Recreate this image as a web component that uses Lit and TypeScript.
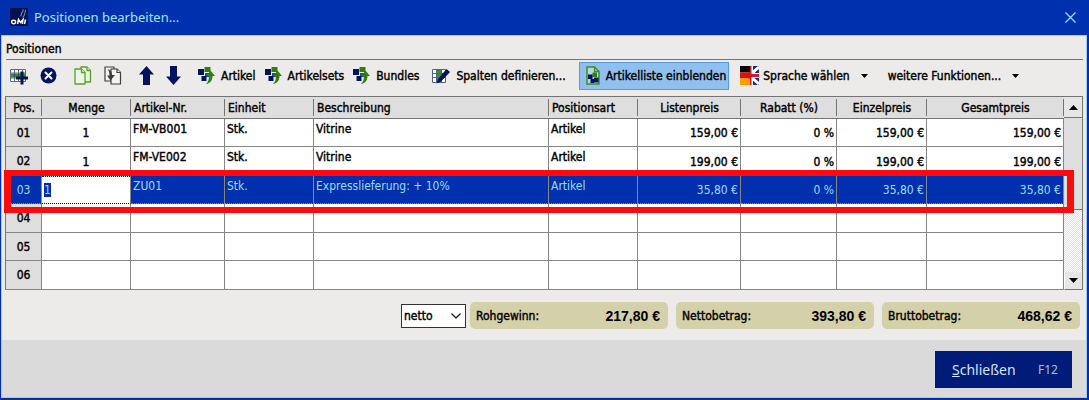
import { LitElement, html, css, svg, nothing } from "lit";
import { customElement, state, query } from "lit/decorators.js";
import { classMap } from "lit/directives/class-map.js";

interface Position {
  pos: string;
  menge?: string;
  nr?: string;
  einheit?: string;
  text?: string;
  art?: string;
  liste?: string;
  rabatt?: string;
  einzel?: string;
  gesamt?: string;
}

const POSITIONS: Position[] = [
  { pos: "01", menge: "1", nr: "FM-VB001", einheit: "Stk.", text: "Vitrine", art: "Artikel", liste: "159,00 €", rabatt: "0 %", einzel: "159,00 €", gesamt: "159,00 €" },
  { pos: "02", menge: "1", nr: "FM-VE002", einheit: "Stk.", text: "Vitrine", art: "Artikel", liste: "199,00 €", rabatt: "0 %", einzel: "199,00 €", gesamt: "199,00 €" },
  { pos: "03", menge: "1", nr: "ZU01", einheit: "Stk.", text: "Expresslieferung: + 10%", art: "Artikel", liste: "35,80 €", rabatt: "0 %", einzel: "35,80 €", gesamt: "35,80 €" },
  { pos: "04" },
  { pos: "05" },
  { pos: "06" },
];

const SUMS = [
  { label: "Rohgewinn:", value: "217,80 €" },
  { label: "Nettobetrag:", value: "393,80 €" },
  { label: "Bruttobetrag:", value: "468,62 €" },
];

const NAVY = "#04145c";
const GREEN = "#2f7f0c";

const icon = (width: number, height: number, content: unknown) => html`
  <svg width=${width} height=${height} viewBox="0 0 ${width} ${height}" aria-hidden="true">${content}</svg>
`;

const insertRow = icon(18, 18, svg`
  <path d="M.5 2.500h15v12H.5zM.5 6h15M.5 11h15M4.500 2.500v12M8.500 2.500v12M12.500 2.500v12" fill="#fff" stroke="#5b6c93"/>
  <path d="M1 6.500h14v4H1z" fill="#3c8d24"/>
  <path d="M4.500 6.500v4M8.500 6.500v4" stroke="#234f3f"/>
  <path d="M10.500 4.500h3v5h4.500v3h-4.500v5h-3v-5H6v-3h4.500z" fill="${NAVY}"/>
`);
const remove = icon(17, 17, svg`
  <circle cx="8.500" cy="8.500" r="8" fill="${NAVY}"/>
  <path d="M5.500 5.500l6 6M11.500 5.500l-6 6" stroke="#fff" stroke-width="2" stroke-linecap="round"/>
`);
const copy = icon(18, 19, svg`
  <g fill="#edf3e6" stroke="#5aa02c" stroke-width="1.300" stroke-linejoin="round">
    <path d="M7 1h6l3.500 3.500V16H7z"/>
    <path d="M13 1v3.500h3.500"/>
    <path d="M1 3h6.500L11 6.500V18H1z"/>
    <path d="M7.500 3v3.500H11"/>
  </g>
`);
const paste = icon(18, 19, svg`
  <g fill="#f4f3f2" stroke="#3c3c3c" stroke-width="1.200" stroke-linejoin="round">
    <path d="M1 1h9v14H1z"/>
    <path d="M7 3h6l3.500 3.500V18H7z"/>
    <path d="M13 3v3.500h3.500"/>
  </g>
  <path d="M3.500 3c3 1 4.500 3 4.500 6h3l-4.500 5.500L3 9.500h2.500c0-2.500-.5-4.500-2-6.500z" fill="#3c3c3c"/>
`);
const arrowUp = icon(15, 19, svg`<path d="M7.500 0L15 8.500h-4V19H4V8.500H0z" fill="${NAVY}"/>`);
const arrowDown = icon(15, 19, svg`<path d="M7.500 19L15 10.500h-4V0H4v10.500H0z" fill="${NAVY}"/>`);
const article = icon(17, 17, svg`
  <path d="M0 2h6v6H0z" fill="${NAVY}"/>
  <path d="M6.500 0h6v5h-6z" fill="${GREEN}"/>
  <path d="M7 6h4v4H7z" fill="#284c91"/>
  <path d="M3.500 9h5v5h-5z" fill="${NAVY}"/>
  <path d="M12.500 3.500L17 9h-2.500c0 4-2 7.500-6.500 8 2-1.500 3-4.500 3-8H8.500z" fill="${GREEN}"/>
`);
const columns = icon(18, 16, svg`
  <path d="M.5 1.500h13v13H.5z" fill="#fff" stroke="#4d648f"/>
  <path d="M5 2h4.500v12H5z" fill="#3c8d24"/>
  <path d="M.5 5.500h13M.5 9.500h13M4.500 1.500v13M9.500 1.500v13" stroke="#4d648f" fill="none"/>
  <path d="M14.500 1L18 4 9 13.500l-4.500 2 1.500-4.500z" fill="${NAVY}"/>
`);
const articleList = icon(14, 19, svg`
  <path d="M1 1h7.500L13 5.500V18H1z" fill="#b4d8dc" stroke="#3c8d24" stroke-width="1.500"/>
  <path d="M8.500 1v4.500H13" fill="none" stroke="#3c8d24" stroke-width="1.300"/>
  <path d="M6.500 6.500h4.500v4.500H6.500z" fill="${GREEN}"/>
  <path d="M2 8.500h4.500v4.500H2zM4.500 13h3.500v4H4.500zM8 11.500h4.500v5H8z" fill="${NAVY}"/>
`);
const flags = icon(19, 19, svg`
  <path d="M0 0h10v6.500H0z" fill="#080808"/>
  <path d="M0 6.500h10v6H0z" fill="#d8140c"/>
  <path d="M0 12.500h10V19H0z" fill="#f8a000"/>
  <path d="M10 0h9v19h-9z" fill="#1c2c74"/>
  <path d="M10 9l9-8M10 10l9 8" stroke="#fff" stroke-width="3"/>
  <path d="M10 0h3v7h6v5h-6v7h-3z" fill="#fff"/>
  <path d="M10 0h1.500v8H19v3h-7.500v8H10z" fill="#d01830"/>
  <path d="M8 6.500h3v6H8z" fill="#d8140c"/>
`);
const caret = icon(7, 4, svg`<path d="M0 0h7L3.500 4z" fill="#000"/>`);

@customElement("app-root")
export class AppRoot extends LitElement {
  @state() private listShown = true;
  @query(".qty") private qty!: HTMLInputElement;

  static styles = css`
    :host {
      display: block;
      font: 12px/16px "DejaVu Sans Condensed", "DejaVu Sans", sans-serif;
      font-stretch: condensed;
      color: #000;
    }
    * { box-sizing: border-box; }
    svg { display: block; flex: none; }
    button { font: inherit; color: inherit; background: none; border: 0; padding: 0; }

    .window {
      display: flex;
      flex-direction: column;
      min-height: 100vh;
      padding: 0 2px 2px 1px;
      background: #0030ae;
    }
    .title {
      display: flex;
      align-items: center;
      gap: 6px;
      height: 35px;
      padding: 0 11px 1px 9px;
      color: #a4e4fa;
      font: 13px/18px "Noto Sans", sans-serif;
    }
    .title h1 { flex: 1; margin: 0; font: inherit; }
    .content {
      flex: 1;
      padding: 5px 3px 9px 4px;
      background: #edebe9;
      border: solid #a9c8ee;
      border-width: 1px 1px 0;
    }
    .heading {
      margin: 0;
      padding-bottom: 1px;
      font: inherit;
      line-height: 17px;
      -webkit-text-stroke: 0.4px;
      border-bottom: 1px solid #747474;
    }
    .toolbar {
      display: flex;
      align-items: center;
      height: 36px;
      padding: 0 4px 5px;
      -webkit-text-stroke: 0.4px;
      white-space: nowrap;
    }
    .group { display: flex; align-items: center; gap: 12px; margin-right: 17px; }
    .group.labelled { gap: 9px; margin-right: 13px; }
    .tool { display: flex; align-items: center; gap: 6px; }
    .tool.drop { gap: 4px; margin-left: 11px; }
    .tool.drop .arrow { margin-left: 7px; }
    .tool.drop.more { margin-left: 20px; }
    .toggle { height: 28px; padding: 0 2px 0 6px; border: 1px solid transparent; }
    .toggle.on { background: #92c0ee; border-color: #4c9cf0; }

    .grid { display: flex; margin-left: -1px; border: 1px solid #747474; border-bottom: 0; }
    table {
      flex: 1;
      table-layout: fixed;
      border-collapse: separate;
      border-spacing: 0;
      background: #fff;
      -webkit-text-stroke: 0.4px;
    }
    .c36 { width: 36px; }
    .c89 { width: 89px; }
    .c94 { width: 94px; }
    .c103 { width: 103px; }
    .c96 { width: 96px; }
    .c90 { width: 90px; }
    .c137 { width: 137px; }
    th {
      height: 22px;
      padding: 0 3px;
      font-weight: 400;
      background: linear-gradient(#747474, #747474) right 2px / 1px 17px no-repeat #dedede;
      border-bottom: 1px solid #747474;
    }
    td {
      height: 28px;
      padding: 2px 2px 0;
      border: solid #868686;
      border-width: 0 1px 1px 0;
      vertical-align: top;
    }
    tbody .pos { height: 28px; }
    tr:nth-child(even) td, tr:nth-child(even) .pos { height: 29px; }
    .left { text-align: left; }
    .center { text-align: center; }
    .right { text-align: right; }
    td.center, td.right { padding-top: 1px; vertical-align: middle; }
    tbody .pos {
      background: #dedede;
      border-right: 1px solid #868686;
      border-bottom-color: #868686;
    }
    .selected { position: relative; }
    .selected td, .selected .pos {
      color: #9cdcf6;
      background: #0030ae;
      border-bottom: 1px dotted #d07038;
      -webkit-text-stroke: 0;
    }
    .selected .edit {
      padding: 0;
      background: #fff;
      border-bottom-color: #000;
    }
    .qty {
      display: block;
      width: 100%;
      height: 27px;
      padding: 0 2px;
      font: inherit;
      border: 0;
      border-top: 1px dotted #000;
      outline: 0;
      border-radius: 0;
      background: none;
      color: #000;
    }
    .qty::selection { background: #0030ae; color: #9cdcf6; }
    .selected .pos::after {
      content: "";
      position: absolute;
      inset: -6px -10px -9px -2px;
      border: solid #fa0c0c;
      border-width: 6px 7px;
      pointer-events: none;
      z-index: 1;
    }
    .scroll {
      display: flex;
      flex-direction: column;
      width: 18px;
      background: repeating-conic-gradient(#fff 0 25%, #e2e2e2 0 50%) 0 0 / 2px 2px;
    }
    .step {
      display: grid;
      place-items: center;
      height: 21px;
      background: #e6e6e6;
      border-bottom: 1px solid #747474;
    }
    .thumb { height: 92px; background: #dedede; border-bottom: 1px solid #747474; }
    .step.down { height: 18px; margin-top: auto; border-left: 1px solid #fff; }

    .sums {
      display: flex;
      justify-content: flex-end;
      gap: 8px;
      margin-top: 12px;
      padding-right: 3px;
      -webkit-text-stroke: 0.4px;
    }
    .mode { display: grid; align-items: center; width: 65px; margin: 2px -4px 1px 0; }
    .mode select, .mode svg { grid-area: 1 / 1; }
    .mode select {
      height: 24px;
      padding: 0 2px;
      font: inherit;
      color: inherit;
      background: #fff;
      border: 1px solid #333;
      border-radius: 0;
      appearance: none;
      -webkit-text-stroke: inherit;
    }
    .mode svg { justify-self: end; margin-right: 5px; pointer-events: none; }
    .sum {
      display: flex;
      align-items: center;
      justify-content: space-between;
      width: 198px;
      height: 27px;
      padding: 0 8px 0 6px;
      background: #d4d0aa;
      border-radius: 5px;
    }
    .sum output {
      font: bold 14px/16px "Liberation Sans", Arial, sans-serif;
      -webkit-text-stroke: 0;
    }

    .footer {
      display: flex;
      justify-content: flex-end;
      padding: 11px 14px 9px;
      background: #dadada;
      border: solid #a9c8ee;
      border-width: 0 1px 1px;
    }
    .close {
      display: flex;
      align-items: center;
      justify-content: space-between;
      width: 137px;
      height: 37px;
      padding: 0 14px 0 17px;
      color: #d4e2f4;
      background: #001c78;
      font: 14px/20px "Noto Sans", sans-serif;
    }
    .key { font-size: 12px; color: #9cc0e8; }
  `;

  firstUpdated() {
    this.qty.focus();
    this.qty.select();
  }

  private row(p: Position) {
    const selected = p.pos === "03";
    return html`
      <tr class=${classMap({ selected })}>
        <th class="pos" scope="row">${p.pos}</th>
        ${selected
          ? html`<td class="edit"><input class="qty" aria-label="Menge" .value=${p.menge ?? ""} /></td>`
          : html`<td class="center">${p.menge ?? nothing}</td>`}
        <td>${p.nr}</td>
        <td>${p.einheit}</td>
        <td>${p.text}</td>
        <td>${p.art}</td>
        <td class="right">${p.liste}</td>
        <td class="right">${p.rabatt}</td>
        <td class="right">${p.einzel}</td>
        <td class="right">${p.gesamt}</td>
      </tr>
    `;
  }

  render() {
    return html`
      <div class="window">
        <header class="title">
          <svg width="18" height="18" viewBox="0 0 18 18" aria-hidden="true">
            <path d="M0 0h18v18H0z" fill="#03124e"/>
            <ellipse cx="3.600" cy="14" rx="2" ry="1.700" fill="none" stroke="#fff" stroke-width="1.400"/>
            <path d="M7.500 16l1-4.500 2 3 2.500-3-.7 4.500M14.500 16l1-4.500" fill="none" stroke="#fff" stroke-width="1.500"/>
            <path d="M11 8.500c-1-2 2-5 2.500-7M12.500 9c2 0 2.500-3.500 3-7" fill="none" stroke="#6d8fc4" stroke-width="1.100"/>
          </svg>
          <h1>Positionen bearbeiten...</h1>
          <button aria-label="Fenster schließen">
            ${icon(11, 11, svg`<path d="M.5.5l10 10M10.500.5l-10 10" stroke="#a4e4fa" stroke-width="1.200"/>`)}
          </button>
        </header>

        <main class="content">
          <h2 class="heading">Positionen</h2>
          <div class="toolbar" role="toolbar" aria-label="Positionen">
            <div class="group">
              <button aria-label="Position einfügen">${insertRow}</button>
              <button aria-label="Position löschen">${remove}</button>
            </div>
            <div class="group">
              <button aria-label="Kopieren">${copy}</button>
              <button aria-label="Einfügen">${paste}</button>
            </div>
            <div class="group">
              <button aria-label="Nach oben">${arrowUp}</button>
              <button aria-label="Nach unten">${arrowDown}</button>
            </div>
            <div class="group labelled">
              <button class="tool">${article}Artikel</button>
              <button class="tool">${article}Artikelsets</button>
              <button class="tool">${article}Bundles</button>
            </div>
            <div class="group labelled">
              <button class="tool">${columns}Spalten definieren...</button>
            </div>
            <button
              class=${classMap({ tool: true, toggle: true, on: this.listShown })}
              aria-pressed=${this.listShown}
              @click=${() => (this.listShown = !this.listShown)}
            >${articleList}Artikelliste einblenden</button>
            <button class="tool drop">${flags}Sprache wählen<span class="arrow">${caret}</span></button>
            <button class="tool drop more">weitere Funktionen...<span class="arrow">${caret}</span></button>
          </div>

          <div class="grid">
            <table>
              <colgroup>
                <col class="c36" /><col class="c89" /><col class="c94" /><col class="c89" /><col />
                <col class="c89" /><col class="c103" /><col class="c96" /><col class="c90" /><col class="c137" />
              </colgroup>
              <thead>
                <tr>
                  <th scope="col">Pos.</th>
                  <th scope="col">Menge</th>
                  <th class="left" scope="col">Artikel-Nr.</th>
                  <th class="left" scope="col">Einheit</th>
                  <th class="left" scope="col">Beschreibung</th>
                  <th class="left" scope="col">Positionsart</th>
                  <th scope="col">Listenpreis</th>
                  <th scope="col">Rabatt (%)</th>
                  <th scope="col">Einzelpreis</th>
                  <th scope="col">Gesamtpreis</th>
                </tr>
              </thead>
              <tbody>${POSITIONS.map((p) => this.row(p))}</tbody>
            </table>
            <div class="scroll">
              <button class="step" aria-label="Nach oben blättern">
                ${icon(9, 5, svg`<path d="M4.500 0L9 5H0z"/>`)}
              </button>
              <div class="thumb"></div>
              <button class="step down" aria-label="Nach unten blättern">
                ${icon(9, 5, svg`<path d="M0 0h9L4.500 5z"/>`)}
              </button>
            </div>
          </div>

          <div class="sums">
            <div class="mode">
              <select aria-label="Preisart">
                <option>netto</option>
                <option>brutto</option>
              </select>
              ${icon(10, 6, svg`<path d="M.5.5L5 5 9.500.5" fill="none" stroke="#222" stroke-width="1.300"/>`)}
            </div>
            ${SUMS.map((s, i) => html`
              <div class="sum">
                <label for="sum${i}">${s.label}</label>
                <output id="sum${i}">${s.value}</output>
              </div>
            `)}
          </div>
        </main>

        <footer class="footer">
          <button class="close"><span><u>S</u>chließen</span><span class="key">F12</span></button>
        </footer>
      </div>
    `;
  }
}
